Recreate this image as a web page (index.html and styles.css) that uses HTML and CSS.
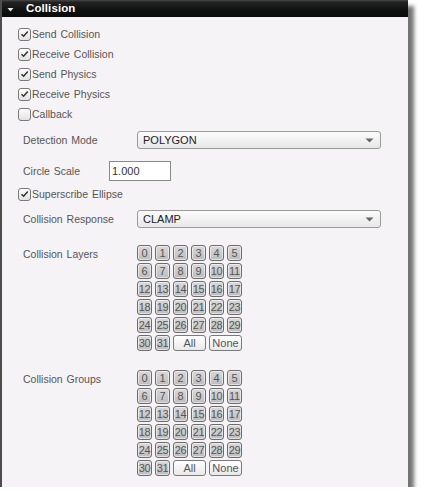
FILE: index.html
```html
<!DOCTYPE html>
<html>
<head>
<meta charset="utf-8">
<link rel="stylesheet" href="styles.css">
</head>
<body>
<div class="panel">
  <div class="header">
    <svg class="caret" width="7" height="5" viewBox="0 0 7 5"><path d="M0.5 1 L6.5 1 L3.5 4.5 Z" fill="#e8e8e8"/></svg>
    <span class="title">Collision</span>
  </div>
  <div class="content">
    <div class="checks">
      <label class="chk"><span class="box on"><svg width="9" height="8" viewBox="0 0 9 8"><path d="M1.5 4.2 L3.6 6.2 L7.8 1.4" fill="none" stroke="#333" stroke-width="1.5"/></svg></span>Send Collision</label>
      <label class="chk"><span class="box on"><svg width="9" height="8" viewBox="0 0 9 8"><path d="M1.5 4.2 L3.6 6.2 L7.8 1.4" fill="none" stroke="#333" stroke-width="1.5"/></svg></span>Receive Collision</label>
      <label class="chk"><span class="box on"><svg width="9" height="8" viewBox="0 0 9 8"><path d="M1.5 4.2 L3.6 6.2 L7.8 1.4" fill="none" stroke="#333" stroke-width="1.5"/></svg></span>Send Physics</label>
      <label class="chk"><span class="box on"><svg width="9" height="8" viewBox="0 0 9 8"><path d="M1.5 4.2 L3.6 6.2 L7.8 1.4" fill="none" stroke="#333" stroke-width="1.5"/></svg></span>Receive Physics</label>
      <label class="chk"><span class="box"></span>Callback</label>
    </div>

    <div class="row row-detect">
      <span class="lbl">Detection Mode</span>
      <div class="select"><span>POLYGON</span><svg class="arrow" width="9" height="5" viewBox="0 0 9 5"><path d="M0.5 0.5 L8.5 0.5 L4.5 4.5 Z" fill="#666"/></svg></div>
    </div>

    <div class="row row-scale">
      <span class="lbl lbl-short">Circle Scale</span>
      <div class="input">1.000</div>
    </div>

    <label class="chk chk-super"><span class="box on"><svg width="9" height="8" viewBox="0 0 9 8"><path d="M1.5 4.2 L3.6 6.2 L7.8 1.4" fill="none" stroke="#333" stroke-width="1.5"/></svg></span>Superscribe Ellipse</label>

    <div class="row row-resp">
      <span class="lbl">Collision Response</span>
      <div class="select"><span>CLAMP</span><svg class="arrow" width="9" height="5" viewBox="0 0 9 5"><path d="M0.5 0.5 L8.5 0.5 L4.5 4.5 Z" fill="#666"/></svg></div>
    </div>

    <div class="bits bits-layers">
      <span class="lbl lbl-top">Collision Layers</span>
      <div class="grid">
        <span class="b">0</span><span class="b">1</span><span class="b">2</span><span class="b">3</span><span class="b">4</span><span class="b">5</span>
        <span class="b">6</span><span class="b">7</span><span class="b">8</span><span class="b">9</span><span class="b">10</span><span class="b">11</span>
        <span class="b">12</span><span class="b">13</span><span class="b">14</span><span class="b">15</span><span class="b">16</span><span class="b">17</span>
        <span class="b">18</span><span class="b">19</span><span class="b">20</span><span class="b">21</span><span class="b">22</span><span class="b">23</span>
        <span class="b">24</span><span class="b">25</span><span class="b">26</span><span class="b">27</span><span class="b">28</span><span class="b">29</span>
        <span class="b">30</span><span class="b">31</span><span class="b w">All</span><span class="b w">None</span>
      </div>
    </div>

    <div class="bits bits-groups">
      <span class="lbl lbl-top">Collision Groups</span>
      <div class="grid">
        <span class="b">0</span><span class="b">1</span><span class="b">2</span><span class="b">3</span><span class="b">4</span><span class="b">5</span>
        <span class="b">6</span><span class="b">7</span><span class="b">8</span><span class="b">9</span><span class="b">10</span><span class="b">11</span>
        <span class="b">12</span><span class="b">13</span><span class="b">14</span><span class="b">15</span><span class="b">16</span><span class="b">17</span>
        <span class="b">18</span><span class="b">19</span><span class="b">20</span><span class="b">21</span><span class="b">22</span><span class="b">23</span>
        <span class="b">24</span><span class="b">25</span><span class="b">26</span><span class="b">27</span><span class="b">28</span><span class="b">29</span>
        <span class="b">30</span><span class="b">31</span><span class="b w">All</span><span class="b w">None</span>
      </div>
    </div>
  </div>
</div>
</body>
</html>
```

FILE: styles.css
```css
html, body {
  margin: 0;
  padding: 0;
  background: #ffffff;
}

body {
  font-family: "Liberation Sans", Arial, sans-serif;
  font-size: 10.5px;
  color: #555;
}

.panel {
  width: 406px;
  height: 487px;
  border-left: 2px solid #4d4d4d;
  background: #f6f3f6;
  box-shadow: 6px 6px 4px rgba(0, 0, 0, 0.55);
  display: flex;
  flex-direction: column;
}

.header {
  height: 17px;
  flex: none;
  display: flex;
  align-items: center;
  background: linear-gradient(#4a4a4a 0, #232323 2px, #111312 9px, #080a09 100%);
  color: #fff;
}

.caret {
  margin-left: 5px;
  margin-top: 1px;
}

.title {
  margin-left: 12px;
  font-weight: bold;
  font-size: 11.5px;
  line-height: 17px;
  letter-spacing: 0.1px;
}

.content {
  padding: 7px 0 0 16px;
  display: flex;
  flex-direction: column;
}

.checks {
  display: flex;
  flex-direction: column;
}

.chk {
  height: 20px;
  display: flex;
  align-items: center;
  color: #555;
  word-spacing: 1px;
}

.box {
  width: 13px;
  height: 13px;
  box-sizing: border-box;
  border: 1px solid #7a7a7a;
  border-radius: 3px;
  background: linear-gradient(#fdfdfd, #e2e2e2);
  display: flex;
  align-items: center;
  justify-content: center;
  margin-right: 1px;
  flex: none;
}

.row {
  display: flex;
  align-items: center;
}

.lbl {
  margin-left: 5px;
  width: 114px;
  flex: none;
  color: #555;
  word-spacing: 1px;
}

.lbl-short {
  width: 86px;
}

.row-detect {
  margin-top: 7px;
  height: 18px;
}

.row-scale {
  margin-top: 12px;
  height: 20px;
}

.chk-super {
  margin-top: 3px;
}

.row-resp {
  margin-top: 6px;
  height: 18px;
}

.select {
  width: 244px;
  height: 18px;
  box-sizing: border-box;
  border: 1px solid #9a9a9a;
  border-radius: 3px;
  background: linear-gradient(#fbfbfb, #e8e8e8);
  display: flex;
  align-items: center;
  justify-content: space-between;
  padding: 0 6px 0 5px;
  color: #222;
  font-size: 11px;
}

.arrow {
  margin-top: 1px;
}

.input {
  width: 62px;
  height: 20px;
  box-sizing: border-box;
  border: 1px solid #8a8a8a;
  background: #fff;
  padding-left: 2px;
  line-height: 18px;
  color: #333;
  font-size: 11px;
}

.bits {
  display: flex;
  align-items: flex-start;
}

.bits-layers {
  margin-top: 17px;
}

.bits-groups {
  margin-top: 19px;
}

.lbl-top {
  padding-top: 3px;
}

.grid {
  display: grid;
  grid-template-columns: repeat(6, 15px);
  grid-auto-rows: 16px;
  gap: 2px 3px;
}

.b {
  box-sizing: border-box;
  border: 1px solid #6c6c6c;
  border-radius: 3px;
  background: linear-gradient(#d9d9d9, #bdbdbd);
  box-shadow: inset 0 0 0 1px rgba(255, 255, 255, 0.55);
  color: #555;
  font-size: 11px;
  line-height: 14px;
  text-align: center;
  letter-spacing: -0.3px;
}

.b.w {
  grid-column: span 2;
  background: linear-gradient(#ffffff, #e9e9e9);
  border-color: #7a7a7a;
  box-shadow: none;
  letter-spacing: 0;
}
```
